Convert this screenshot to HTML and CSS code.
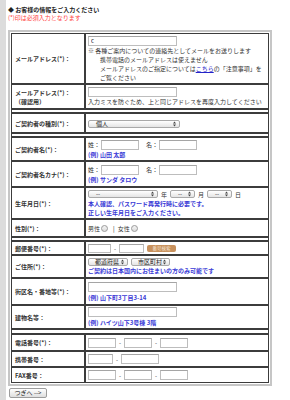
FILE: index.html
```html
<!DOCTYPE html>
<html lang="ja">
<head>
<meta charset="utf-8">
<title>お客様情報入力</title>
<link rel="stylesheet" href="styles.css">
</head>
<body>
<div class="page">
  <div class="title">◆ お客様の情報をご入力ください</div>
  <div class="req">(*)印は必須入力となります</div>
  <table class="form">
    <tr class="r-email">
      <th>メールアドレス(*)：</th>
      <td>
        <input class="tx w-mail" type="text" value="c">
        <div class="note"><span class="kome">※</span> 各種ご案内についての連絡先としてメールをお送りします</div>
        <div class="note ind">携帯電話のメールアドレスは使えません</div>
        <div class="note ind">メールアドレスのご指定については<a href="#">こちら</a>の「注意事項」を</div>
        <div class="note ind">ご覧ください</div>
      </td>
    </tr>
    <tr class="r-conf">
      <th>メールアドレス(*)：<br>（確認用）</th>
      <td>
        <input class="tx w-mail" type="text">
        <div class="note">入力ミスを防ぐため、上と同じアドレスを再度入力してください</div>
      </td>
    </tr>
    <tr class="r-gap"><td colspan="2"></td></tr>
    <tr class="r-type">
      <th>ご契約者の種別(*)：</th>
      <td>
        <span class="sel w-type"><span>個人</span><svg class="arr" viewBox="0 0 3 6" width="3" height="6"><path d="M0 2.4L1.5 0.6L3 2.4Z M0 3.6L1.5 5.4L3 3.6Z"/></svg></span>
      </td>
    </tr>
    <tr class="r-gap"><td colspan="2"></td></tr>
    <tr class="r-name">
      <th>ご契約者名(*)：</th>
      <td>
        <div class="line">
          <span class="pre">姓：</span><input class="tx w-name" type="text">
          <span class="pre mid">名：</span><input class="tx w-name" type="text">
        </div>
        <div class="ex">(例) 山田 太郎</div>
      </td>
    </tr>
    <tr class="r-kana">
      <th>ご契約者名カナ(*)：</th>
      <td>
        <div class="line">
          <span class="pre">姓：</span><input class="tx w-name" type="text">
          <span class="pre mid">名：</span><input class="tx w-name" type="text">
        </div>
        <div class="ex">(例) サンダ タロウ</div>
      </td>
    </tr>
    <tr class="r-birth">
      <th>生年月日(*)：</th>
      <td>
        <div class="line">
          <span class="sel w-year"><span>--</span><svg class="arr" viewBox="0 0 3 6" width="3" height="6"><path d="M0 2.4L1.5 0.6L3 2.4Z M0 3.6L1.5 5.4L3 3.6Z"/></svg></span>
          <span class="unit">年</span>
          <span class="sel w-md"><span>--</span><svg class="arr" viewBox="0 0 3 6" width="3" height="6"><path d="M0 2.4L1.5 0.6L3 2.4Z M0 3.6L1.5 5.4L3 3.6Z"/></svg></span>
          <span class="unit">月</span>
          <span class="sel w-md"><span>--</span><svg class="arr" viewBox="0 0 3 6" width="3" height="6"><path d="M0 2.4L1.5 0.6L3 2.4Z M0 3.6L1.5 5.4L3 3.6Z"/></svg></span>
          <span class="unit">日</span>
        </div>
        <div class="ex">本人確認、パスワード再発行時に必要です。</div>
        <div class="ex">正しい生年月日をご入力ください。</div>
      </td>
    </tr>
    <tr class="r-sex">
      <th>性別(*)：</th>
      <td>
        <div class="line">
          <span>男性</span><input class="rd" type="radio" name="sex">
          <span class="bar">|</span>
          <span>女性</span><input class="rd" type="radio" name="sex">
        </div>
      </td>
    </tr>
    <tr class="r-gap"><td colspan="2"></td></tr>
    <tr class="r-zip">
      <th>郵便番号(*)：</th>
      <td>
        <div class="line">
          <input class="tx sm w-zip1" type="text">
          <span class="dash">-</span>
          <input class="tx sm w-zip2" type="text">
          <span class="btn-search">番号検索</span>
        </div>
      </td>
    </tr>
    <tr class="r-addr">
      <th>ご住所(*)：</th>
      <td>
        <div class="line">
          <span class="sel w-pref"><span>都道府県</span><svg class="arr" viewBox="0 0 3 6" width="3" height="6"><path d="M0 2.4L1.5 0.6L3 2.4Z M0 3.6L1.5 5.4L3 3.6Z"/></svg></span>
          <span class="sel w-city"><span>市区町村</span><svg class="arr" viewBox="0 0 3 6" width="3" height="6"><path d="M0 2.4L1.5 0.6L3 2.4Z M0 3.6L1.5 5.4L3 3.6Z"/></svg></span>
        </div>
        <div class="ex">ご契約は日本国内にお住まいの方のみ可能です</div>
      </td>
    </tr>
    <tr class="r-street">
      <th>街区名・番地等(*)：</th>
      <td>
        <input class="tx w-mail" type="text">
        <div class="ex gap">(例) 山下町3丁目3-14</div>
      </td>
    </tr>
    <tr class="r-bldg">
      <th>建物名等：</th>
      <td>
        <input class="tx w-mail" type="text">
        <div class="ex gap">(例) ハイツ山下3号棟 3階</div>
      </td>
    </tr>
    <tr class="r-gap2"><td colspan="2"></td></tr>
    <tr class="r-tel">
      <th>電話番号(*)：</th>
      <td>
        <div class="line">
          <input class="tx w-tel" type="text"><span class="dash">-</span><input class="tx w-tel" type="text"><span class="dash">-</span><input class="tx w-tel" type="text">
        </div>
      </td>
    </tr>
    <tr class="r-tel2">
      <th>携帯番号：</th>
      <td>
        <div class="line">
          <input class="tx w-mob1" type="text"><span class="dash">-</span><input class="tx w-mob2" type="text">
        </div>
      </td>
    </tr>
    <tr class="r-tel2">
      <th>FAX番号：</th>
      <td>
        <div class="line">
          <input class="tx w-tel" type="text"><span class="dash">-</span><input class="tx w-tel" type="text"><span class="dash">-</span><input class="tx w-tel" type="text">
        </div>
      </td>
    </tr>
  </table>
  <button class="next" type="button">つぎへ --&gt;</button>
</div>
</body>
</html>
```

FILE: styles.css
```css
* { box-sizing: border-box; }
html, body { margin: 0; padding: 0; background: #fff; }
body {
  font-family: "Noto Sans CJK JP", "Noto Sans", sans-serif;
  font-size: 6px;
  line-height: 9px;
  color: #333;
}
.page {
  border-left: 6px solid #dcdcdc;
  min-height: 400px;
  padding: 6px 0 0 2px;
}
.title { font-weight: bold; line-height: 8px; color: #222; }
.req { color: #ff3b3b; line-height: 8px; }

.form {
  margin-top: 8px;
  width: 264px;
  table-layout: fixed;
  border-collapse: separate;
  border-spacing: 0;
  border: 2px solid #c6c6c6;
  padding: 1px;
}
.form th, .form td {
  border: 1px solid #3c3c3c;
  vertical-align: middle;
  padding: 1px 2px;
}
.form th {
  width: 74px;
  text-align: left;
  font-weight: bold;
  color: #333;
  padding-left: 3px;
  white-space: nowrap;
}
.form td { white-space: nowrap; }

.r-email { height: 51px; }
.r-conf { height: 25px; }
.r-gap { height: 4px; }
.r-gap2 { height: 5px; }
.r-gap td, .r-gap2 td { padding: 0; }
.r-type { height: 20px; }
.r-name { height: 24px; }
.r-kana { height: 26px; }
.r-birth { height: 32px; }
.r-sex { height: 18px; }
.r-zip { height: 14px; }
.r-addr { height: 23px; }
.r-street { height: 27px; }
.r-bldg { height: 24px; }
.r-tel { height: 17px; }
.r-tel2 { height: 16px; }

.tx {
  display: block;
  height: 10px;
  margin: 0;
  padding: 0 2px;
  border: 1px solid #bdbdbd;
  border-top-color: #a5a5a5;
  background: #fff;
  font: 6px/8px "Noto Sans CJK JP", "Noto Sans", sans-serif;
  color: #222;
  outline: none;
}
.tx.sm { height: 9px; }
.line .tx { display: inline-block; flex: none; }
.w-mail { width: 89px; }
.w-name { width: 38px; }
.w-zip1 { width: 23px; }
.w-zip2 { width: 25px; }
.w-tel { width: 28px; }
.w-mob1 { width: 25px; }
.w-mob2 { width: 38px; }

.note { color: #333; }
.note .kome { color: #555; font-family: "Noto Sans CJK JP", sans-serif; font-variant-emoji: text; }
.note.ind { padding-left: 12px; }
.note a { color: #2323c8; text-decoration: underline; }

.line { display: flex; align-items: center; }
.pre { flex: none; margin-right: 1px; }
.pre.mid { margin-left: 7px; }
.unit { margin: 0 3px 0 3px; }
.dash { margin: 0 3px 0 3px; }
.bar { margin: 0 3px 0 5px; color: #222; }

.ex { color: #3a3ad6; font-weight: bold; }
.ex.gap { margin-top: 1px; }

.sel {
  display: inline-flex;
  align-items: center;
  justify-content: space-between;
  height: 8px;
  padding: 0 3px 0 7px;
  border: 1px solid #a9a9a9;
  border-radius: 2px;
  background: linear-gradient(#ffffff, #e4e4e4);
  font-size: 6px;
  line-height: 6px;
  color: #222;
  flex: none;
}
.sel .arr { fill: #444; flex: none; }
.w-type { width: 92px; }
.w-year { width: 70px; }
.w-md { width: 25px; }
.w-pref { width: 40px; padding-left: 6px; }
.w-city { width: 39px; margin-left: 3px; padding-left: 6px; }

.rd {
  appearance: none;
  -webkit-appearance: none;
  width: 7px;
  height: 7px;
  margin: 0 0 0 1px;
  border: 1px solid #9a9a9a;
  border-radius: 50%;
  background: linear-gradient(#f4f4f4, #dcdcdc);
  flex: none;
}

.btn-search {
  display: inline-flex;
  align-items: center;
  justify-content: center;
  width: 29px;
  height: 7px;
  margin-left: 3px;
  border-radius: 2px;
  background: #c8915d;
  color: #f6e6d6;
  font-size: 4.5px;
  line-height: 5px;
}

.next {
  display: block;
  margin: 2px 0 0 1px;
  height: 10px;
  width: 38px;
  padding: 0;
  border: 1px solid #9c9c9c;
  border-radius: 2px;
  background: linear-gradient(#ffffff, #dedede);
  font: 6px/8px "Noto Sans CJK JP", "Noto Sans", sans-serif;
  color: #222;
}
```
